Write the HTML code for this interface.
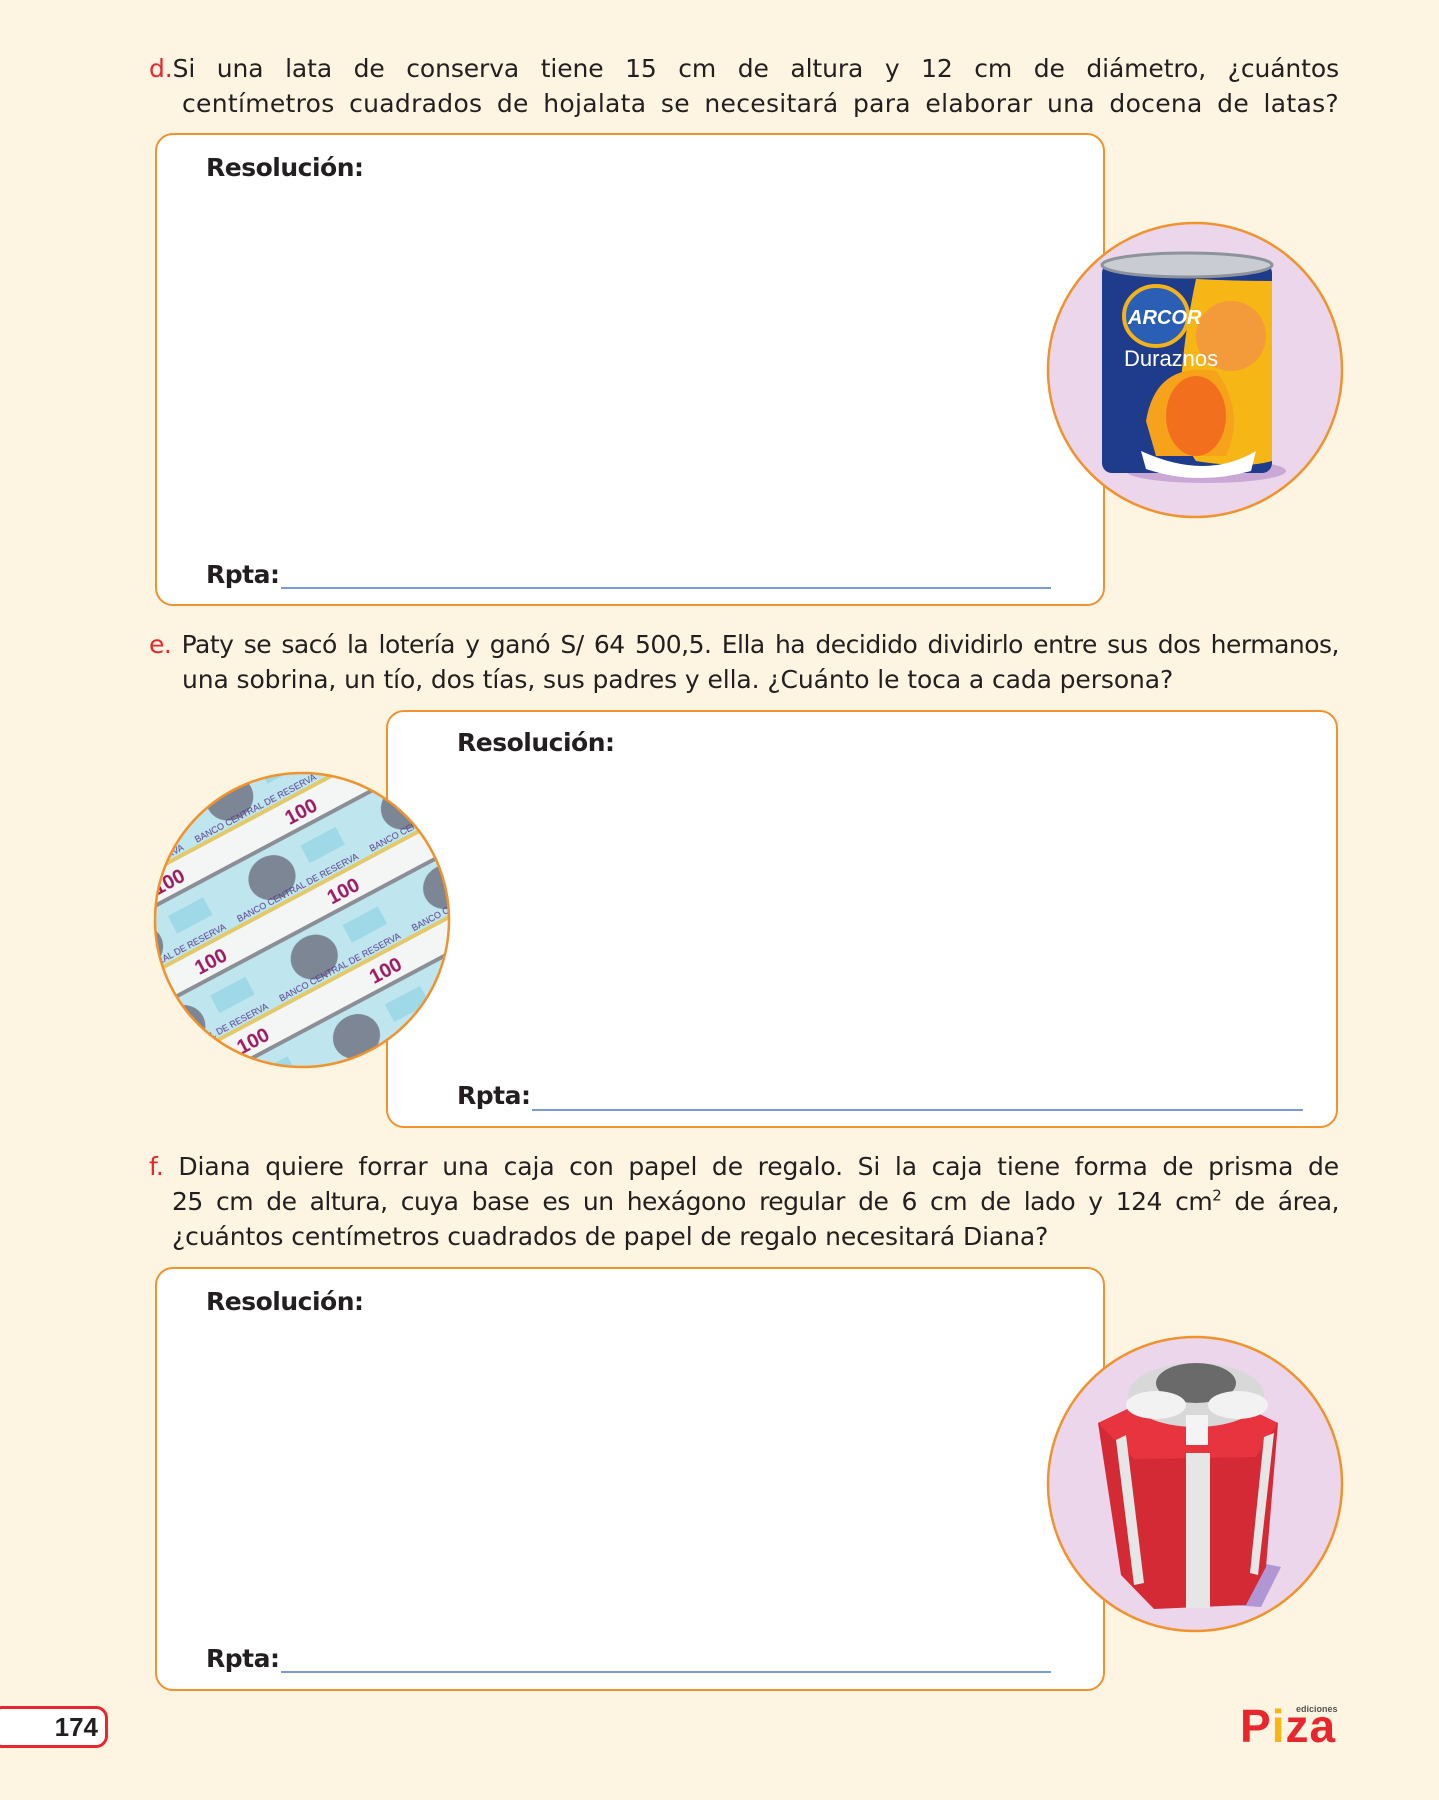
<!DOCTYPE html>
<html><head><meta charset="utf-8"><style>
body{margin:0;background:#fdf4e1;}
.pg{position:relative;width:1439px;height:1800px;background:#fdf4e1;overflow:hidden;font-family:"DejaVu Sans","Liberation Sans",sans-serif;color:#231f20;}
.q{position:absolute;font-size:25px;line-height:35px;letter-spacing:-0.1px;text-align:justify;text-align-last:justify;}
.q .l{color:#e8262e;}
.box{position:absolute;background:#fff;border:2px solid #f0932f;border-radius:18px;box-sizing:border-box;}
.lbl{position:absolute;font-weight:bold;font-size:25px;letter-spacing:-0.5px;}
.line{position:absolute;height:2px;background:#7b9ad6;}
svg{position:absolute;}
</style></head><body><div class="pg">

<div class="q" style="left:149px;top:51px;width:1190px;"><span class="l">d.</span>Si una lata de conserva tiene 15 cm de altura y 12 cm de diámetro, ¿cuántos</div>
<div class="q" style="left:182px;top:86px;width:1157px;letter-spacing:0.3px;">centímetros cuadrados de hojalata se necesitará para elaborar una docena de latas?</div>

<div class="box" style="left:155px;top:133px;width:950px;height:473px;"></div>
<div class="lbl" style="left:206px;top:153px;">Resolución:</div>
<div class="lbl" style="left:206px;top:560px;">Rpta:</div>
<div class="line" style="left:281px;top:587px;width:770px;"></div>

<svg style="left:1046px;top:221px" width="298" height="298" viewBox="0 0 298 298">
<circle cx="149" cy="149" r="147" fill="#ecd6ec" stroke="#f0932f" stroke-width="2.5"/>
<ellipse cx="160" cy="250" rx="80" ry="12" fill="#c9a8d6"/>
<rect x="56" y="42" width="170" height="210" rx="10" fill="#1f3b8c"/>
<ellipse cx="141" cy="44" rx="85" ry="12" fill="#c9ccd3" stroke="#8d939b" stroke-width="3"/>
<path d="M150 58 Q190 60 226 60 L226 240 Q200 248 150 240 Q120 200 150 58Z" fill="#f6b616"/>
<circle cx="185" cy="115" r="35" fill="#f39a3a"/>
<path d="M100 200 Q110 140 170 150 Q200 190 180 235 L110 235Z" fill="#f7a21b"/>
<ellipse cx="150" cy="195" rx="30" ry="40" fill="#f26f1e"/>
<path d="M95 230 Q160 260 210 230 L205 250 Q150 265 100 248Z" fill="#fff"/>
<ellipse cx="110" cy="95" rx="32" ry="30" fill="#2a5fb5" stroke="#f4b21a" stroke-width="4"/>
<text x="82" y="103" font-family="Liberation Sans" font-size="20" font-style="italic" font-weight="bold" fill="#fff">ARCOR</text>
<text x="78" y="145" font-family="Liberation Sans" font-size="22" fill="#fff">Duraznos</text>
</svg>

<div class="q" style="left:149px;top:627px;width:1190px;letter-spacing:-0.5px;"><span class="l">e.</span> Paty se sacó la lotería y ganó S/ 64 500,5. Ella ha decidido dividirlo entre sus dos hermanos,</div>
<div class="q" style="left:182px;top:662px;text-align:left;text-align-last:left;">una sobrina, un tío, dos tías, sus padres y ella. ¿Cuánto le toca a cada persona?</div>

<div class="box" style="left:386px;top:710px;width:952px;height:418px;"></div>
<div class="lbl" style="left:457px;top:728px;">Resolución:</div>
<div class="lbl" style="left:457px;top:1081px;">Rpta:</div>
<div class="line" style="left:532px;top:1109px;width:771px;"></div>

<svg style="left:153px;top:771px" width="298" height="298" viewBox="0 0 298 298">
<defs><clipPath id="c2"><circle cx="149" cy="149" r="147"/></clipPath>
<pattern id="bill" width="150" height="90" patternUnits="userSpaceOnUse" patternTransform="rotate(-28)">
<rect width="150" height="90" fill="#bfe6ef"/>
<rect x="0" y="0" width="150" height="28" fill="#f4f6f6"/>
<rect x="0" y="28" width="150" height="4" fill="#8b8f95"/>
<rect x="0" y="86" width="150" height="4" fill="#e3c96a"/>
<ellipse cx="55" cy="60" rx="24" ry="22" fill="#7d8694"/>
<rect x="95" y="45" width="40" height="20" fill="#9fd9e8"/>
<text x="95" y="22" font-family="Liberation Sans" font-weight="bold" font-size="20" fill="#9c1b63">100</text>
<text x="5" y="84" font-family="Liberation Sans" font-size="9" fill="#5a3a8a">BANCO CENTRAL DE RESERVA</text>
</pattern></defs>
<g clip-path="url(#c2)"><rect width="298" height="298" fill="url(#bill)"/></g>
<circle cx="149" cy="149" r="147" fill="none" stroke="#f0932f" stroke-width="2.5"/>
</svg>

<div class="q" style="left:149px;top:1149px;width:1190px;"><span class="l">f.</span> Diana quiere forrar una caja con papel de regalo. Si la caja tiene forma de prisma de</div>
<div class="q" style="left:172px;top:1184px;width:1167px;letter-spacing:-0.5px;">25 cm de altura, cuya base es un hexágono regular de 6 cm de lado y 124 cm<sup style="font-size:15px;line-height:0">2</sup> de área,</div>
<div class="q" style="left:172px;top:1219px;text-align:left;text-align-last:left;">¿cuántos centímetros cuadrados de papel de regalo necesitará Diana?</div>

<div class="box" style="left:155px;top:1267px;width:950px;height:424px;"></div>
<div class="lbl" style="left:206px;top:1287px;">Resolución:</div>
<div class="lbl" style="left:206px;top:1644px;">Rpta:</div>
<div class="line" style="left:281px;top:1671px;width:770px;"></div>

<svg style="left:1046px;top:1335px" width="298" height="298" viewBox="0 0 298 298">
<circle cx="149" cy="149" r="147" fill="#ecd6ec" stroke="#f0932f" stroke-width="2.5"/>
<path d="M200 225 L235 232 L215 272 L185 270Z" fill="#b097d4"/>
<path d="M52 88 L90 70 L190 68 L232 88 L220 232 L200 270 L108 274 L75 240Z" fill="#d42a35"/>
<path d="M52 88 L90 70 L190 68 L232 88 L210 122 L88 124Z" fill="#e8343f"/>
<rect x="140" y="118" width="24" height="155" fill="#e6e6e6"/>
<path d="M70 105 L80 100 L98 248 L88 250Z" fill="#e6e6e6"/>
<path d="M218 102 L228 98 L212 240 L204 238Z" fill="#e6e6e6"/>
<ellipse cx="150" cy="60" rx="68" ry="32" fill="#d8d8d8"/>
<ellipse cx="150" cy="48" rx="40" ry="20" fill="#6a6a6a"/>
<ellipse cx="110" cy="70" rx="30" ry="14" fill="#f2f2f2"/>
<ellipse cx="192" cy="70" rx="30" ry="14" fill="#f2f2f2"/>
<rect x="140" y="80" width="22" height="30" fill="#f4f4f4"/>
</svg>

<div style="position:absolute;left:-10px;top:1706px;width:118px;height:42px;border:3px solid #e8262e;border-radius:12px;background:#fff;box-sizing:border-box;"></div>
<div style="position:absolute;left:0;top:1710px;width:98px;text-align:right;font-family:'Liberation Sans',sans-serif;font-weight:bold;font-size:26px;line-height:34px;">174</div>

<div style="position:absolute;left:1240px;top:1706px;font-family:'Liberation Sans',sans-serif;font-weight:bold;font-size:46px;line-height:40px;color:#e8262e;letter-spacing:1px;">P<span style="color:#f6b616">i</span>za</div>
<div style="position:absolute;left:1296px;top:1704px;font-family:'Liberation Sans',sans-serif;font-weight:bold;font-size:9px;color:#555;">ediciones</div>
</div></body></html>
